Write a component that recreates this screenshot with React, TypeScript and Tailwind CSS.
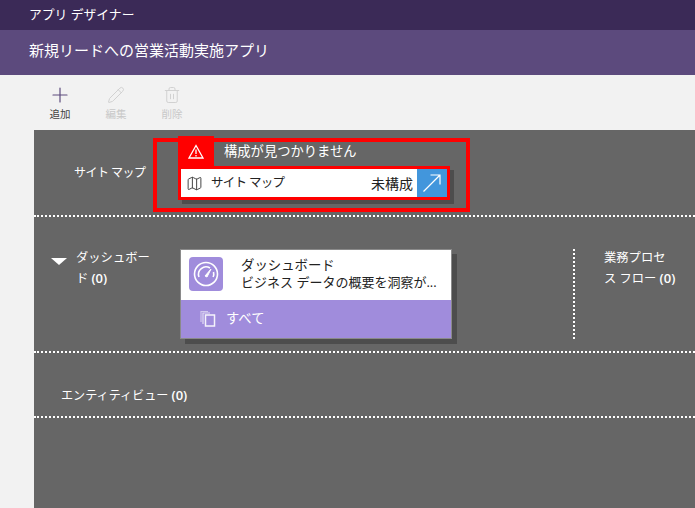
import { Map, Plus, Pencil, Trash2 } from "lucide-react";

const font = { fontFamily: '"Segoe UI", "Open Sans", "Noto Sans CJK JP", sans-serif' };

function Gauge() {
    return (
        <div className="w-[34px] h-[34px] rounded-[4px] bg-[#a08cdc] flex items-center justify-center">
            <svg width="26" height="26" viewBox="0 0 26 26" fill="none" stroke="white" strokeWidth="1.6">
                <circle cx="13" cy="13" r="11.5" />
                <path d="M6 16a7.5 7.5 0 0 1 11-9" />
                <path d="M20.5 11a7.5 7.5 0 0 1-.4 5" />
                <path d="M12 15l6-7-4 8z" fill="white" strokeWidth="1" />
            </svg>
        </div>
    );
}

function Pages() {
    return (
        <svg width="16" height="17" viewBox="0 0 16 17" fill="none" stroke="white" strokeWidth="1.2" className="opacity-90">
            <path d="M1 12V1.500h7" opacity=".6" />
            <path d="M3 14V3h7" opacity=".8" />
            <rect x="5.500" y="5" width="9" height="11" strokeWidth="1.500" />
        </svg>
    );
}

function ToolButton({ label, disabled, children }: any) {
    return (
        <div className="w-[56px] flex flex-col items-center">
            <div className="h-[24px] flex items-center justify-center">{children}</div>
            <span className={`text-[10.5px] leading-[14px] ${disabled ? "text-[#c8c8c8]" : "text-[#444]"}`}>{label}</span>
        </div>
    );
}

export default function App() {
    return (
        <div className="w-[695px] h-[508px] overflow-hidden bg-[#f2f2f2] flex flex-col" style={font}>
            <div className="h-[30px] shrink-0 bg-[#3b2a57] text-white text-[12.8px] flex items-center pl-[29px]">アプリ デザイナー</div>
            <div className="h-[45px] shrink-0 bg-[#5c4a7d] text-white text-[15px] flex items-center pl-[29px] pb-[5px]">新規リードへの営業活動実施アプリ</div>

            <div className="h-[55px] shrink-0 flex items-start pl-[32px] pt-[8px]">
                <ToolButton label="追加">
                    <Plus size={24} strokeWidth={1.2} className="text-[#5c4a7d]" />
                </ToolButton>
                <ToolButton label="編集" disabled>
                    <Pencil size={18} strokeWidth={1.3} className="text-[#d0d0d0]" />
                </ToolButton>
                <ToolButton label="削除" disabled>
                    <Trash2 size={18} strokeWidth={1.3} className="text-[#d0d0d0]" />
                </ToolButton>
            </div>

            <div className="flex-1 ml-[34px] bg-[#666666] text-white text-[13px] flex flex-col">
                {/* site map row */}
                <div className="h-[87px] shrink-0 relative border-b-2 border-dotted border-white flex">
                    <div className="w-[144px] shrink-0 pl-[40px] pt-[34px] leading-[17px] text-[12px] tracking-[-0.5px]">サイト マップ</div>
                    <div className="pt-[36px]">
                        <div className="w-[272px] h-[34px] border-[3px] border-[#ff0000] bg-white flex shadow-[4px_4px_0_#4d4d4d] text-[#222]">
                            <div className="flex-1 flex items-center pl-[5px] min-w-0">
                                <Map size={17} strokeWidth={1.4} className="text-[#444] shrink-0" />
                                <span className="ml-[8px] flex-1 text-[12.5px] tracking-[-0.7px]">サイト マップ</span>
                                <span className="mr-[4px] text-[14px]">未構成</span>
                            </div>
                            <div className="w-[30px] bg-[#4296dc] flex items-center justify-center shrink-0">
                                <svg width="20" height="20" viewBox="0 0 20 20" fill="none" stroke="white" strokeWidth="1.2">
                                    <path d="M1.500 18.500L18 2M8.500 2H18v9.500" />
                                </svg>
                            </div>
                        </div>
                    </div>

                    {/* error highlight */}
                    <div className="absolute left-[119px] top-[8px] w-[317px] h-[74px] border-[4px] border-[#ff0000]" />
                    <div className="absolute left-[144px] top-[6px] w-[36px] h-[31px] bg-[#ff0000] flex items-center justify-center">
                        <svg width="16" height="15" viewBox="0 0 16 15" fill="none" stroke="white" strokeWidth="1.3">
                            <path d="M8 1.500L15 14H1z" />
                            <path d="M8 5.500v4.500M8 11v1.500" />
                        </svg>
                    </div>
                    <div className="absolute left-[190px] top-[13px] leading-[17px] text-[13.3px]">構成が見つかりません</div>
                </div>

                {/* dashboards row */}
                <div className="h-[136px] shrink-0 border-b-2 border-dotted border-white flex">
                    <div className="w-[146px] shrink-0 flex pl-[17px] pt-[31px]">
                        <div className="w-0 h-0 mt-[10px] border-x-[8px] border-x-transparent border-t-[7px] border-t-white shrink-0" />
                        <div className="ml-[9px] whitespace-nowrap leading-[20px] text-[12.3px]">
                            ダッシュボー<br />ド <b className="font-semibold text-[13px]">(0)</b>
                        </div>
                    </div>
                    <div className="pt-[32px]">
                        <div className="w-[272px] h-[90px] border border-[#8a8a8a] shadow-[5px_5px_0_#4d4d4d] flex flex-col">
                            <div className="h-[50px] bg-white text-[#222] flex pl-[8px] pt-[7px]">
                                <Gauge />
                                <div className="ml-[18px] leading-[17px] min-w-0">
                                    <div className="text-[13.4px] leading-[17px]">ダッシュボード</div>
                                    <div className="whitespace-nowrap">ビジネス データの概要を洞察が...</div>
                                </div>
                            </div>
                            <div className="flex-1 bg-[#a08cdc] flex items-center pl-[19px] pb-[1px]">
                                <Pages />
                                <span className="ml-[10px] text-[13.3px]">すべて</span>
                            </div>
                        </div>
                    </div>
                    <div className="ml-[121px] mt-[32px] h-[90px] border-l-2 border-dotted border-white" />
                    <div className="ml-[29px] pt-[31px] whitespace-nowrap leading-[20px] text-[12.3px]">
                        業務プロセ<br />ス フロー <b className="font-semibold text-[13px]">(0)</b>
                    </div>
                </div>

                {/* entity views row */}
                <div className="h-[65px] shrink-0 border-b-2 border-dotted border-white pl-[27px] pt-[33px] leading-[18px] text-[12.1px]">
                    エンティティビュー <b className="font-semibold text-[13px]">(0)</b>
                </div>
            </div>
        </div>
    );
}
